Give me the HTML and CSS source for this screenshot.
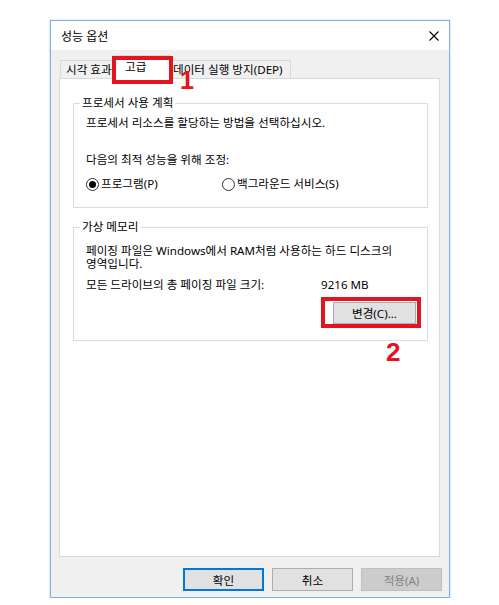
FILE: index.html
```html
<!DOCTYPE html>
<html lang="ko">
<head>
    <meta charset="UTF-8">
    <meta name="viewport" content="width=device-width, initial-scale=1.0">
    <title>성능 옵션</title>
    <link rel="stylesheet" href="styles.css">
</head>
<body>

    <div class="dialog">
        <div class="titlebar">
            <span class="title">성능 옵션</span>
            <svg class="close" width="10" height="10" viewBox="0 0 10 10">
                <path d="M0.5 0.5 L9.5 9.5 M9.5 0.5 L0.5 9.5" stroke="#000" stroke-width="1.1" fill="none"/>
            </svg>
        </div>

        <div class="content">
            <div class="tabs">
                <div class="tab tab-visual">시각 효과</div>
                <div class="tab tab-active">고급</div>
                <div class="tab tab-dep">데이터 실행 방지(DEP)</div>
            </div>

            <div class="panel">
                <!-- 프로세서 사용 계획 -->
                <div class="group group-cpu">
                    <div class="group-title">프로세서 사용 계획</div>
                    <p class="line line-first">프로세서 리소스를 할당하는 방법을 선택하십시오.</p>
                    <p class="line line-adjust">다음의 최적 성능을 위해 조정:</p>
                    <div class="radios">
                        <label class="radio radio-program"><span class="ring checked"></span>프로그램(P)</label>
                        <label class="radio"><span class="ring"></span>백그라운드 서비스(S)</label>
                    </div>
                </div>

                <!-- 가상 메모리 -->
                <div class="group group-mem">
                    <div class="group-title">가상 메모리</div>
                    <p class="desc">페이징 파일은 Windows에서 RAM처럼 사용하는 하드 디스크의 영역입니다.</p>
                    <div class="total">
                        <span class="total-label">모든 드라이브의 총 페이징 파일 크기:</span>
                        <span>9216 MB</span>
                    </div>
                    <div class="change-row">
                        <div class="mark-box">
                            <button class="btn btn-change">변경(C)...</button>
                        </div>
                    </div>
                </div>
            </div>

            <div class="actions">
                <button class="btn btn-default">확인</button>
                <button class="btn">취소</button>
                <button class="btn" disabled>적용(A)</button>
            </div>
        </div>

        <div class="mark-tab"></div>
        <div class="step step-1">1</div>
        <div class="step step-2">2</div>
    </div>

</body>
</html>
```

FILE: styles.css
```css
/* Página */
body {
    margin: 0;
    background-color: #fff;
    font-family: "Noto Sans", "Noto Sans CJK KR", sans-serif;
    font-size: 11.6px;
    color: #000;
    word-break: keep-all;
}

p {
    margin: 0;
}

/* Ventana */
.dialog {
    position: relative;
    box-sizing: border-box;
    width: 400px;
    height: 578px;
    margin: 20px 0 0 50px;
    border: 1px solid #7cb0e2;
    box-shadow: 0 0 1px 0 #a8ccef, 0 1px 3px rgba(0, 0, 0, 0.12);
    background-color: #f0f0f0;
    display: flex;
    flex-direction: column;
}

.titlebar {
    height: 29px;
    flex: none;
    background-color: #fff;
    display: flex;
    align-items: center;
    justify-content: space-between;
    padding: 0 10px;
}

.title {
    font-size: 12px;
}

.close {
    display: block;
}

.content {
    flex: 1;
    display: flex;
    flex-direction: column;
    padding: 5px 9px 6px 8px;
}

/* Pestañas */
.tabs {
    height: 23px;
    display: flex;
    align-items: flex-end;
    padding-left: 1px;
}

.tab {
    box-sizing: border-box;
    height: 18px;
    line-height: 17px;
    border: 1px solid #d9d9d9;
    border-bottom: none;
    background-color: #f0f0f0;
    white-space: nowrap;
    overflow: hidden;
}

.tab-visual {
    width: 53px;
    padding-left: 5px;
    border-right: none;
}

.tab-active {
    position: relative;
    z-index: 1;
    width: 57px;
    height: 24px;
    line-height: 21px;
    margin-bottom: -1px;
    padding-left: 11px;
    background-color: #fff;
}

.tab-dep {
    width: 121px;
    padding-left: 3px;
    border-left: none;
}

.panel {
    flex: 1;
    border: 1px solid #d9d9d9;
    background-color: #fff;
    padding: 0 11px 0 13px;
}

/* Grupos */
.group {
    border: 1px solid #dcdcdc;
    padding: 0 12px;
}

.group-title {
    width: fit-content;
    line-height: 16px;
    margin: -9px 0 0 -6px;
    padding: 0 2px;
    background-color: #fff;
}

.group-cpu {
    margin-top: 24px;
    padding-bottom: 15px;
}

.line {
    line-height: 16px;
}

.line-first {
    margin-top: 4px;
}

.line-adjust {
    margin-top: 21px;
}

.radios {
    display: flex;
    margin-top: 8px;
    line-height: 16px;
}

.radio {
    display: flex;
    align-items: center;
}

.radio-program {
    width: 136px;
}

.ring {
    box-sizing: border-box;
    width: 13px;
    height: 13px;
    margin-right: 2px;
    border: 1px solid #333;
    border-radius: 50%;
    display: flex;
    align-items: center;
    justify-content: center;
}

.ring.checked::after {
    content: "";
    width: 7px;
    height: 7px;
    border-radius: 50%;
    background-color: #000;
}

.group-mem {
    margin-top: 19px;
    padding-bottom: 12px;
}

.desc {
    margin-top: 9px;
    line-height: 13px;
}

.total {
    display: flex;
    margin-top: 7px;
    line-height: 16px;
}

.total-label {
    width: 235px;
}

.change-row {
    display: flex;
    justify-content: flex-end;
    margin: 4px -6px 0 0;
}

.mark-box {
    border: 4px solid #e3141e;
    padding: 1px 1px 0 8px;
}

/* Botones */
.btn {
    box-sizing: border-box;
    height: 23px;
    width: 81px;
    border: 1px solid #adadad;
    background-color: #e1e1e1;
    font-family: inherit;
    font-size: 11.6px;
    color: #000;
    padding: 0;
}

.btn-change {
    display: block;
    width: 83px;
    height: 22px;
}

.btn-default {
    border-color: #0078d7;
    box-shadow: inset 0 0 0 1px #0078d7;
}

.btn:disabled {
    background-color: #cccccc;
    border-color: #bfbfbf;
    color: #838383;
}

.actions {
    display: flex;
    justify-content: flex-end;
    gap: 8px;
    margin: 11px -2px 0 0;
}

/* Marcas rojas sobre la captura */
.mark-tab {
    position: absolute;
    left: 61px;
    top: 35px;
    width: 61px;
    height: 28px;
    box-sizing: border-box;
    border: 4px solid #e3141e;
    z-index: 2;
}

.step {
    position: absolute;
    font-family: "Liberation Sans", Arial, sans-serif;
    font-weight: bold;
    color: #e3141e;
}

.step-1 {
    left: 129px;
    top: 47px;
    font-size: 25px;
    line-height: 25px;
}

.step-2 {
    left: 335px;
    top: 318px;
    font-size: 26px;
    line-height: 26px;
}
```
